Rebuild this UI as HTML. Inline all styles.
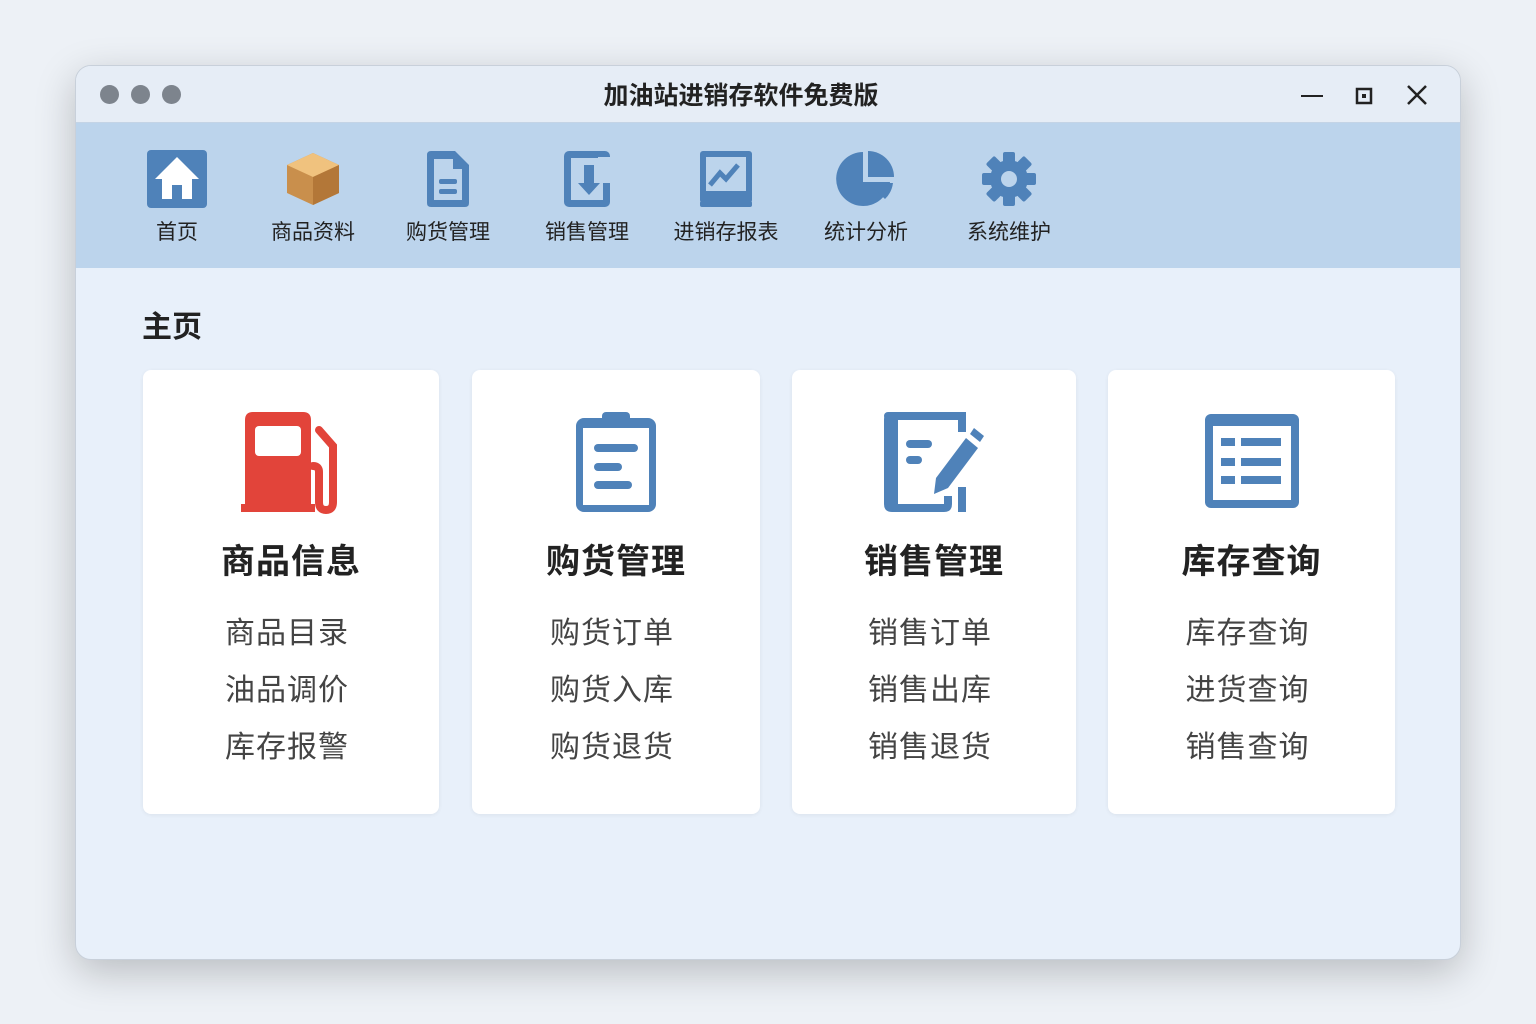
<!DOCTYPE html><html><head><meta charset="utf-8"><style>
*{margin:0;padding:0;box-sizing:border-box}
body{width:1536px;height:1024px;background:#edf1f6;font-family:"Liberation Sans","Noto Sans CJK SC",sans-serif;position:relative;overflow:hidden}
.win{position:absolute;left:75px;top:65px;width:1386px;height:895px;border-radius:16px;background:#e8f0fa;box-shadow:0 12px 40px rgba(0,0,0,.22);overflow:hidden;border:1px solid #c8d0da}
.tb{height:57px;background:#e6edf6;border-bottom:1px solid #c4d4e6;position:relative}
.dot{position:absolute;top:19px;width:19px;height:19px;border-radius:50%;background:#7d848d}
.title{position:absolute;left:0;right:54px;top:10px;text-align:center;font-size:25px;font-weight:bold;color:#222}
.tool{height:145px;background:#bcd4ec;position:relative}
.it{position:absolute;top:26px;width:120px;text-align:center;font-size:21px;color:#222}
.it svg{display:block;margin:0 auto 7px;height:60px}
.h{position:absolute;left:66px;top:236px;font-size:30px;font-weight:bold;color:#222}
.card{position:absolute;top:304px;height:444px;background:#fff;border-radius:8px;box-shadow:0 1px 4px rgba(0,0,0,.06);text-align:center}
.card svg{position:absolute;top:42px;left:50%;transform:translateX(-50%)}
.ct{position:absolute;top:164px;width:100%;font-size:34px;font-weight:bold;color:#222;letter-spacing:1px}
.ci{position:absolute;top:235px;width:100%;font-size:30px;color:#444;line-height:57px;letter-spacing:1px;padding-right:8px}
</style></head><body><div class="win">
<div class="tb"><div class="dot" style="left:24px"></div><div class="dot" style="left:55px"></div><div class="dot" style="left:86px"></div>
<div class="title">加油站进销存软件免费版</div>
<svg style="position:absolute;left:1224px;top:20px" width="24" height="20"><path d="M1 10H23" stroke="#222" stroke-width="2"/></svg>
<svg style="position:absolute;left:1278px;top:20px" width="20" height="20"><rect x="3" y="3" width="14" height="14" fill="none" stroke="#222" stroke-width="2.5"/><rect x="8" y="8" width="4" height="4" fill="#222"/></svg>
<svg style="position:absolute;left:1330px;top:18px" width="22" height="22"><path d="M2 2L20 20M20 2L2 20" stroke="#222" stroke-width="2.5"/></svg>
</div>
<div class="tool">
<div class="it" style="left:41px"><svg width="62" height="60"><rect x="1" y="1" width="60" height="58" rx="4" fill="#4f82b9"/><path d="M31 8L9 30H16V50H26V36H36V50H46V30H53Z" fill="#fff"/></svg>首页</div>
<div class="it" style="left:177px"><svg width="60" height="60"><path d="M30 4L56 16V44L30 56L4 44V16Z" fill="#c98f4c"/><path d="M30 4L56 16L30 28L4 16Z" fill="#f0c27e"/><path d="M30 28V56L56 44V16Z" fill="#b37738"/></svg>商品资料</div>
<div class="it" style="left:312px"><svg width="50" height="60"><path d="M4 6Q4 2 8 2H32L46 16V54Q46 58 42 58H8Q4 58 4 54Z" fill="#4f82b9"/><path d="M11 10H30V20H39V51H11Z" fill="#bcd4ec"/><rect x="16" y="30" width="18" height="5" rx="2" fill="#4f82b9"/><rect x="16" y="40" width="18" height="5" rx="2" fill="#4f82b9"/></svg>购货管理</div>
<div class="it" style="left:451px"><svg width="54" height="60"><rect x="4" y="2" width="46" height="56" rx="5" fill="#4f82b9"/><rect x="11" y="9" width="32" height="42" fill="#bcd4ec"/><path d="M24 16V34H18L29 46L40 34H34V16Z" fill="#4f82b9"/><rect x="38" y="8" width="12" height="26" fill="#bcd4ec"/></svg>销售管理</div>
<div class="it" style="left:590px"><svg width="56" height="60"><rect x="2" y="2" width="52" height="52" rx="3" fill="#4f82b9"/><rect x="8" y="8" width="40" height="34" fill="#bcd4ec"/><path d="M12 36L22 24L28 30L40 16" stroke="#4f82b9" stroke-width="5" fill="none"/><rect x="2" y="52" width="52" height="6" rx="2" fill="#4f82b9"/></svg>进销存报表</div>
<div class="it" style="left:730px"><svg width="60" height="60"><path d="M27 3A27 27 0 1 0 54 33H27Z" fill="#4f82b9"/><path d="M32 2A26 26 0 0 1 58 28H32Z" fill="#4f82b9"/><path d="M32 34H57A27 27 0 0 1 49 50Z" fill="#4f82b9"/></svg>统计分析</div>
<div class="it" style="left:873px"><svg width="56" height="60"><g transform="translate(28 30)" fill="#4f82b9"><circle r="19"/><g id="t"><rect x="-6" y="-27" width="12" height="12" rx="2"/></g><use href="#t" transform="rotate(45)"/><use href="#t" transform="rotate(90)"/><use href="#t" transform="rotate(135)"/><use href="#t" transform="rotate(180)"/><use href="#t" transform="rotate(225)"/><use href="#t" transform="rotate(270)"/><use href="#t" transform="rotate(315)"/><circle r="8" fill="#bcd4ec"/></g></svg>系统维护</div>
</div>
<div class="h">主页</div>
<div class="card" style="left:67px;width:296px"><svg width="104" height="102"><path d="M6 8Q6 0 14 0H64Q72 0 72 8V92H76V100H2V92H6Z" fill="#e2443a"/><rect x="16" y="14" width="46" height="30" rx="4" fill="#fff"/><path d="M80 18L94 34V90Q94 98 87 98Q80 98 80 90V60Q80 54 74 54" stroke="#e2443a" stroke-width="8" fill="none" stroke-linecap="round"/></svg>
<div class="ct">商品信息</div><div class="ci">商品目录<br>油品调价<br>库存报警</div></div>
<div class="card" style="left:396px;width:288px"><svg width="88" height="102"><rect x="4" y="6" width="80" height="94" rx="8" fill="#4f82b9"/><rect x="11" y="16" width="66" height="77" fill="#fff"/><rect x="30" y="0" width="28" height="16" rx="4" fill="#4f82b9"/><rect x="22" y="32" width="44" height="8" rx="4" fill="#4f82b9"/><rect x="22" y="51" width="28" height="8" rx="4" fill="#4f82b9"/><rect x="22" y="69" width="38" height="8" rx="4" fill="#4f82b9"/></svg>
<div class="ct">购货管理</div><div class="ci">购货订单<br>购货入库<br>购货退货</div></div>
<div class="card" style="left:716px;width:284px"><svg width="104" height="102"><path d="M10 0H62V8H16V92H62V84H70V92Q70 100 62 100H10Q2 100 2 92V8Q2 0 10 0Z" fill="#4f82b9"/><rect x="2" y="0" width="82" height="8" rx="4" fill="#4f82b9"/><rect x="76" y="0" width="8" height="20" fill="#4f82b9"/><rect x="76" y="75" width="8" height="25" fill="#4f82b9"/><rect x="24" y="28" width="26" height="8" rx="4" fill="#4f82b9"/><rect x="24" y="44" width="16" height="8" rx="4" fill="#4f82b9"/><path d="M52 82L54 66L84 26L96 36L66 76Z" fill="#4f82b9"/><path d="M88 22L92 16L102 24L98 30Z" fill="#4f82b9"/></svg>
<div class="ct">销售管理</div><div class="ci">销售订单<br>销售出库<br>销售退货</div></div>
<div class="card" style="left:1032px;width:287px"><svg width="98" height="98"><rect x="2" y="2" width="94" height="94" rx="6" fill="#4f82b9"/><rect x="10" y="14" width="78" height="74" fill="#fff"/><g fill="#4f82b9"><rect x="18" y="26" width="14" height="8"/><rect x="38" y="26" width="40" height="8"/><rect x="18" y="46" width="14" height="8"/><rect x="38" y="46" width="40" height="8"/><rect x="18" y="64" width="14" height="8"/><rect x="38" y="64" width="40" height="8"/></g></svg>
<div class="ct">库存查询</div><div class="ci">库存查询<br>进货查询<br>销售查询</div></div>
</div></body></html>
